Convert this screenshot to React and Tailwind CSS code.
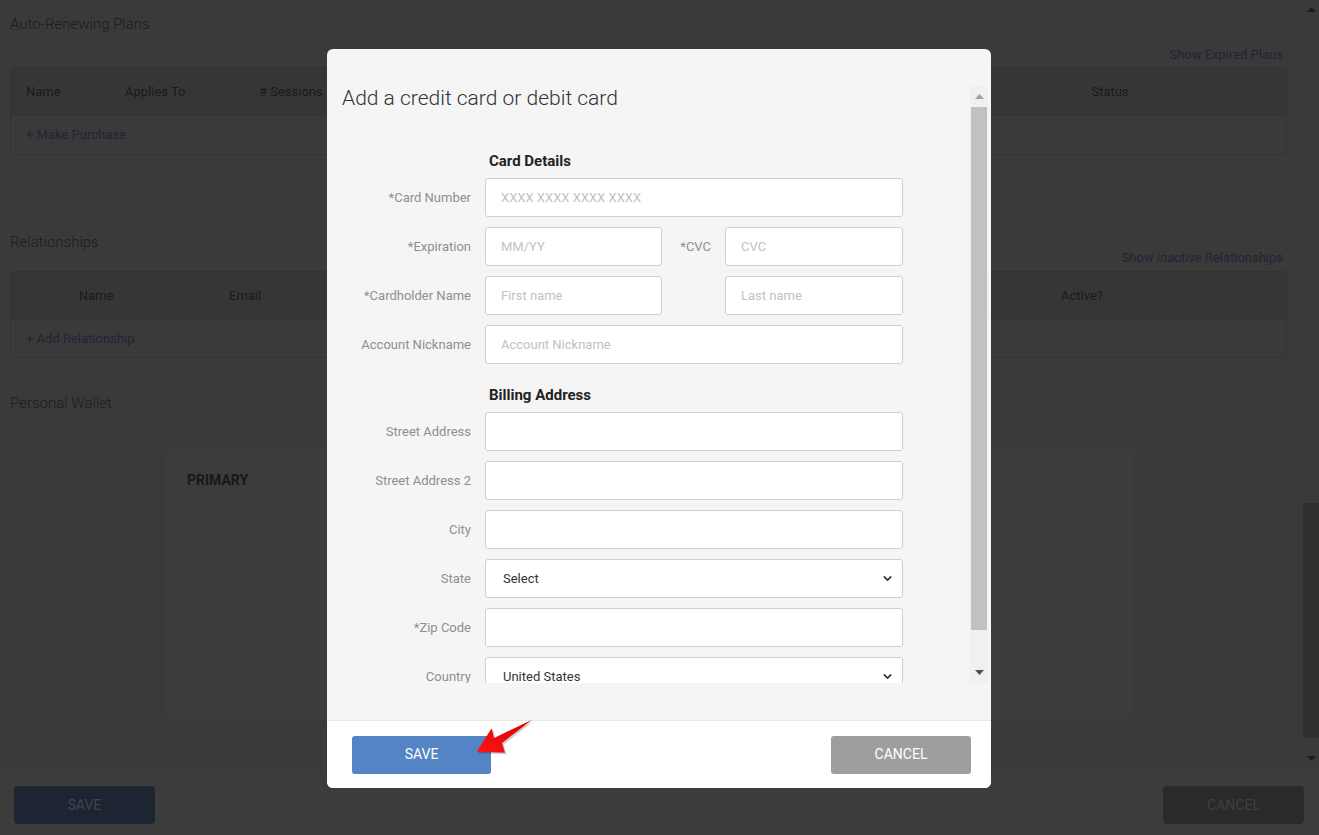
import { ChevronDown } from 'lucide-react'

function Tri({ down = false, className = '' }) {
  return (
    <svg width="9" height="5" viewBox="0 0 9 5" className={className}>
      <polygon points={down ? '0,0 9,0 4.5,5' : '0,5 9,5 4.5,0'} fill="currentColor" />
    </svg>
  )
}

function TextField({ placeholder, width = 'w-[418px]' }) {
  return (
    <input
      placeholder={placeholder}
      className={`${width} h-[39px] rounded-[3px] border border-[#cfcfcf] bg-white pl-[15px] text-[13px] text-[#333] outline-none placeholder:text-[#c2c2c2]`}
    />
  )
}

function SelectField({ value }) {
  return (
    <div className="relative w-[418px] h-[39px]">
      <select
        defaultValue={value}
        className="h-full w-full appearance-none rounded-[3px] border border-[#cfcfcf] bg-white pl-[17px] text-[13px] text-[#333] outline-none"
      >
        <option>{value}</option>
      </select>
      <ChevronDown
        size={13}
        strokeWidth={3}
        className="pointer-events-none absolute right-[9px] top-[13px] text-[#333]"
      />
    </div>
  )
}

function Row({ label, children }) {
  return (
    <div className="flex items-center h-[39px] mb-[10px]">
      <label className="w-[129px] mr-[14px] text-right text-[13px] text-[#8f8f8f]">{label}</label>
      {children}
    </div>
  )
}

function HalfRow({ label, left, midLabel, right }) {
  return (
    <div className="flex items-center h-[39px] mb-[10px]">
      <label className="w-[129px] mr-[14px] text-right text-[13px] text-[#8f8f8f]">{label}</label>
      <TextField placeholder={left} width="w-[177px]" />
      <span className="w-[63px] pr-[14px] text-right text-[13px] text-[#8f8f8f]">{midLabel}</span>
      <TextField placeholder={right} width="w-[178px]" />
    </div>
  )
}

function CardModal() {
  return (
    <div className="absolute left-[327px] top-[49px] w-[664px] h-[739px] rounded-[6px] bg-[#f5f5f5] overflow-hidden flex flex-col">
      <div className="flex-1 min-h-0 pt-[37px] pb-[37px] pl-[15px] pr-[3px]">
        <div className="flex h-full">
          <div className="flex-1 overflow-hidden">
            <h1 className="text-[21px] leading-[24px] font-light text-[#333]">Add a credit card or debit card</h1>

            <h2 className="mt-[41px] mb-[7px] pl-[147px] text-[15px] leading-[20px] font-bold text-[#222]">Card Details</h2>
            <Row label="*Card Number">
              <TextField placeholder="XXXX XXXX XXXX XXXX" />
            </Row>
            <HalfRow label="*Expiration" left="MM/YY" midLabel="*CVC" right="CVC" />
            <HalfRow label="*Cardholder Name" left="First name" midLabel="" right="Last name" />
            <Row label="Account Nickname">
              <TextField placeholder="Account Nickname" />
            </Row>

            <h2 className="mt-[21px] mb-[7px] pl-[147px] text-[15px] leading-[20px] font-bold text-[#222]">Billing Address</h2>
            <Row label="Street Address">
              <TextField />
            </Row>
            <Row label="Street Address 2">
              <TextField />
            </Row>
            <Row label="City">
              <TextField />
            </Row>
            <Row label="State">
              <SelectField value="Select" />
            </Row>
            <Row label="*Zip Code">
              <TextField />
            </Row>
            <Row label="Country">
              <SelectField value="United States" />
            </Row>
          </div>

          {/* scrollbar */}
          <div className="w-[18px] bg-[#f0f0f0] flex flex-col">
            <div className="h-[21px] flex items-center justify-center text-[#a3a3a3]">
              <Tri />
            </div>
            <div className="h-[523px] mx-[1px] bg-[#c1c1c1]" />
            <div className="flex-1" />
            <div className="h-[21px] flex items-center justify-center text-[#505050]">
              <Tri down />
            </div>
          </div>
        </div>
      </div>

      <div className="h-[68px] shrink-0 bg-white border-t border-[#e8e8e8] flex items-center justify-between pl-[25px] pr-[20px]">
        <button className="w-[139px] h-[38px] rounded-[3px] bg-[#5584c4] text-white text-[14px]">SAVE</button>
        <button className="w-[140px] h-[38px] rounded-[3px] bg-[#9e9e9e] text-white text-[14px]">CANCEL</button>
      </div>
    </div>
  )
}

function PointerArrow() {
  return (
    <svg width="70" height="46" viewBox="0 0 70 46" className="absolute left-[468px] top-[712px]">
      <defs>
        <linearGradient id="arr" x1="0" y1="1" x2="1" y2="0">
          <stop offset="0" stopColor="#ff1414" />
          <stop offset="1" stopColor="#d80000" />
        </linearGradient>
      </defs>
      <polygon
        points="8.7,39.7 37,40.7 34,31 63.7,8 26,26 23.7,16.3"
        fill="#000"
        opacity="0.2"
        transform="translate(1.5,1.5)"
      />
      <polygon points="8.7,39.7 37,40.7 34,31 63.7,8 26,26 23.7,16.3" fill="url(#arr)" />
    </svg>
  )
}

export default function App() {
  return (
    <div className="relative h-[835px] w-[1319px] overflow-hidden bg-[#3a3a3a] font-['Roboto',sans-serif]">
      <div className="flex h-[770px]">
        <main className="flex-1 overflow-hidden pl-[10px] pr-[16px] pt-[14px]">
          {/* Auto-Renewing Plans */}
          <div className="flex justify-between h-[50px]">
            <span className="self-start text-[15px] leading-[20px] font-light text-[#1c1c1c]">Auto-Renewing Plans</span>
            <span className="self-end mr-[4px] text-[13px] leading-[18px] text-[#1f2634]">Show Expired Plans</span>
          </div>
          <div className="mt-[3px] rounded-[3px] border border-[#333]">
            <div className="flex items-center h-[48px] bg-[#363636] pl-[15px] pr-[76px] border-b border-[#323232] text-[13px] text-[#1a1a1a]">
              <span className="w-[99px]">Name</span>
              <span className="w-[134px]">Applies To</span>
              <span># Sessions</span>
              <span className="ml-auto w-[200px] text-center">Status</span>
            </div>
            <div className="flex items-center h-[38px] pl-[15px] text-[13px] text-[#1f2634]">+ Make Purchase</div>
          </div>

          {/* Relationships */}
          <div className="mt-[77px] flex justify-between h-[35px]">
            <span className="self-start text-[15px] leading-[20px] font-light text-[#1c1c1c]">Relationships</span>
            <span className="self-end mr-[4px] text-[13px] leading-[18px] text-[#1f2634]">Show inactive Relationships</span>
          </div>
          <div className="mt-[4px] rounded-[3px] border border-[#333]">
            <div className="flex items-center h-[48px] bg-[#363636] pr-[104px] border-b border-[#323232] text-[13px] text-[#1a1a1a]">
              <span className="w-[170px] text-center">Name</span>
              <span className="ml-[48px]">Email</span>
              <span className="ml-auto w-[200px] text-center">Active?</span>
            </div>
            <div className="flex items-center h-[37px] pl-[15px] text-[13px] text-[#1f2634]">+ Add Relationship</div>
          </div>

          {/* Personal Wallet */}
          <div className="mt-[35px] text-[15px] leading-[20px] font-light text-[#1c1c1c]">Personal Wallet</div>
          <div className="mt-[36px] ml-[155px] w-[968px] h-[269px] bg-[#3c3c3c] px-[22px] pt-[22px]">
            <div className="text-[14px] leading-[18px] font-bold text-[#181818]">PRIMARY</div>
            <div className="mt-[18px] h-[186px] rounded-[6px] border border-dashed border-[#373737]" />
          </div>
        </main>

        {/* page scrollbar */}
        <div className="w-[16px] flex flex-col text-[#1a1a1a]">
          <div className="h-[18px] flex items-center justify-center"><Tri /></div>
          <div className="h-[485px]" />
          <div className="h-[235px] bg-[#303030]" />
          <div className="flex-1" />
          <div className="h-[24px] flex items-center justify-center"><Tri down /></div>
        </div>
      </div>

      <div className="h-[65px] bg-[#3c3c3c] flex items-start justify-between pt-[16px] pl-[14px] pr-[15px]">
        <button className="w-[141px] h-[38px] rounded-[4px] bg-[#1c2531] text-[14px] text-[#3c4552]">SAVE</button>
        <button className="w-[141px] h-[38px] rounded-[4px] bg-[#2a2a2a] text-[14px] text-[#404040]">CANCEL</button>
      </div>

      <CardModal />
      <PointerArrow />
    </div>
  )
}
